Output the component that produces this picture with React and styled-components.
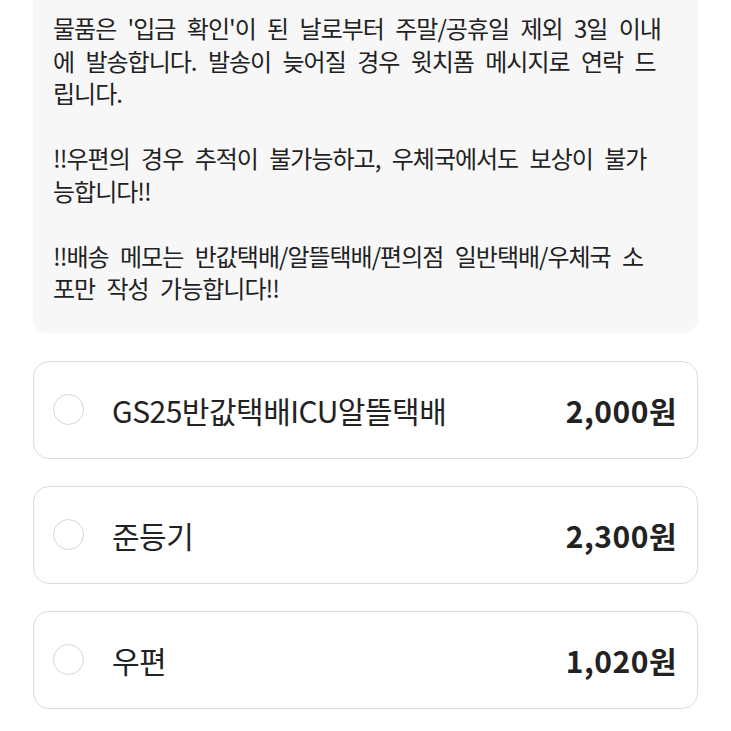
import React, { useState } from 'react';
import styled, { createGlobalStyle } from 'styled-components';

const GlobalStyle = createGlobalStyle`
  html, body {
    margin: 0;
    padding: 0;
    background: #ffffff;
  }
  body {
    font-family: "Noto Sans CJK KR", "Noto Sans", sans-serif;
    color: #222222;
  }
`;

const Page = styled.div`
  width: 731px;
  padding: 0 33px;
  box-sizing: border-box;
  display: flex;
  flex-direction: column;
`;

const NoticeBox = styled.div`
  background: #f7f7f7;
  border-radius: 0 0 14px 14px;
  padding: 12px 20px 28px 20px;
  margin-bottom: 28px;
`;

const Paragraph = styled.p`
  margin: 0 0 32.5px 0;
  font-size: 24px;
  line-height: 32.5px;
  letter-spacing: -1px;
  word-spacing: 7px;
  color: #222222;

  &:last-child {
    margin-bottom: 0;
  }
`;

const OptionList = styled.div`
  display: flex;
  flex-direction: column;
  gap: 27px;
`;

const OptionCard = styled.label`
  height: 98px;
  box-sizing: border-box;
  border: 1.5px solid ${p => (p.$active ? '#222' : '#dcdcdc')};
  border-radius: 16px;
  background: #ffffff;
  display: flex;
  align-items: center;
  padding: 0 20px 0 19px;
  cursor: pointer;
`;

const Radio = styled.span`
  width: 31px;
  height: 31px;
  border-radius: 50%;
  border: 1px solid #d6d6d6;
  box-sizing: border-box;
  flex-shrink: 0;
  margin-right: 28px;
  background: ${p => (p.$active ? '#222' : '#fff')};
`;

const OptionName = styled.span`
  flex: 1;
  font-size: 30px;
  letter-spacing: -0.5px;
  color: #222222;
`;

const OptionPrice = styled.span`
  font-size: 30px;
  font-weight: 700;
  letter-spacing: 0.5px;
  color: #222222;
`;

const options = [
  { id: 'gs', name: 'GS25반값택배ICU알뜰택배', price: '2,000원' },
  { id: 'jun', name: '준등기', price: '2,300원' },
  { id: 'post', name: '우편', price: '1,020원' },
];

const App = () => {
  const [selected, setSelected] = useState(null);

  return (
    <>
      <GlobalStyle />
      <Page>
        <NoticeBox>
          <Paragraph>
            물품은 '입금 확인'이 된 날로부터 주말/공휴일 제외 3일 이내<br />
            에 발송합니다. 발송이 늦어질 경우 윗치폼 메시지로 연락 드<br />
            립니다.
          </Paragraph>
          <Paragraph>
            !!우편의 경우 추적이 불가능하고, 우체국에서도 보상이 불가<br />
            능합니다!!
          </Paragraph>
          <Paragraph>
            !!배송 메모는 반값택배/알뜰택배/편의점 일반택배/우체국 소<br />
            포만 작성 가능합니다!!
          </Paragraph>
        </NoticeBox>

        <OptionList>
          {options.map(opt => (
            <OptionCard key={opt.id} onClick={() => setSelected(opt.id)}>
              <Radio $active={selected === opt.id} />
              <OptionName>{opt.name}</OptionName>
              <OptionPrice>{opt.price}</OptionPrice>
            </OptionCard>
          ))}
        </OptionList>
      </Page>
    </>
  );
};

export default App;
